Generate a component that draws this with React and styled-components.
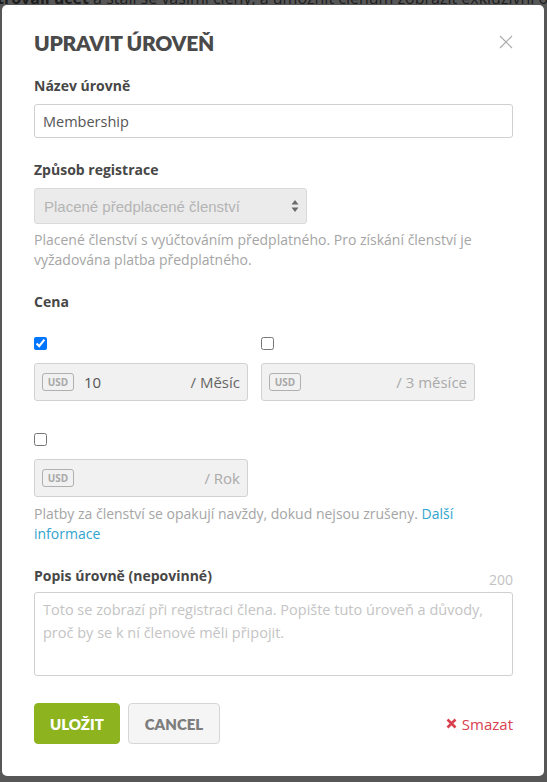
import React, { useState } from 'react'
import styled, { createGlobalStyle } from 'styled-components'

const GlobalStyle = createGlobalStyle`
    * { box-sizing: border-box; }
    body {
        margin: 0;
        background: #575757;
        font-family: "Open Sans", "Noto Sans", sans-serif;
        overflow: hidden;
    }
`

const Page = styled.div`
    width: 547px;
    height: 782px;
    background: #575757;
    overflow: hidden;
`

const BehindText = styled.div`
    height: 5px;
    overflow: hidden;
    white-space: nowrap;
    font-size: 16px;
    line-height: 16px;
    color: #1e1e1e;
    margin-left: -3px;
    div { margin-top: -10px; }
    b { font-weight: 700; }
`

const Modal = styled.div`
    width: 542px;
    margin-left: 2px;
    background: #fff;
    border-radius: 5px;
    padding: 24px 31px 32px 32px;
`

const Header = styled.div`
    display: flex;
    justify-content: space-between;
    align-items: flex-start;
    margin-bottom: 19px;
`

const Title = styled.h2`
    margin: 0;
    font-family: Lato, "Open Sans", sans-serif;
    font-weight: 800;
    font-size: 21px;
    line-height: 28px;
    letter-spacing: -0.3px;
    color: #4a4a4a;
`

const CloseButton = styled.button`
    border: none;
    background: none;
    padding: 0;
    margin: 6px 0 0 0;
    width: 14px;
    height: 14px;
    cursor: pointer;
    svg { display: block; }
`

const Field = styled.div`
    margin-bottom: ${p => p.$gap ?? 22}px;
`

const LabelRow = styled.div`
    display: flex;
    justify-content: space-between;
    align-items: flex-end;
    margin-bottom: ${p => p.$gap ?? 8}px;
`

const Label = styled.label`
    display: block;
    font-size: 14px;
    line-height: 20px;
    font-weight: 700;
    color: #474747;
`

const Counter = styled.span`
    font-size: 14px;
    line-height: 20px;
    color: #c2c2c2;
    margin-bottom: -4px;
`

const TextInput = styled.input`
    display: block;
    width: 100%;
    height: 34px;
    border: 1px solid #d0d0d0;
    border-radius: 3px;
    padding: 0 8px;
    font-family: "Open Sans", sans-serif;
    font-size: 14.5px;
    color: #555;
    outline: none;
`

const Select = styled.div`
    width: 273px;
    height: 36px;
    border: 1px solid #dadada;
    border-radius: 3px;
    background: #ebebeb;
    display: flex;
    align-items: center;
    justify-content: space-between;
    padding: 0 7px 0 9px;
    font-family: "Liberation Sans", Arial, sans-serif;
    font-size: 15px;
    color: #b4b4b4;
`

const Help = styled.p`
    margin: ${p => p.$top ?? 6}px 0 0;
    font-size: 14px;
    line-height: 20px;
    color: #a5a5a5;
    a {
        color: #2fa4cc;
        text-decoration: none;
    }
`

const PriceGrid = styled.div`
    display: grid;
    grid-template-columns: 214px 214px;
    column-gap: 13px;
    row-gap: 32px;
    margin-top: 25px;
`

const PriceCell = styled.div`
    display: flex;
    flex-direction: column;
    align-items: flex-start;
    gap: 13px;
`

const Check = styled.input`
    margin: 0;
    width: 13px;
    height: 13px;
`

const PriceBox = styled.div`
    width: 214px;
    height: 38px;
    border: 1px solid #d2d2d2;
    border-radius: 3px;
    background: #f1f1f1;
    display: flex;
    align-items: center;
    padding: 0 7px 0 7px;
    font-size: 15px;
`

const Currency = styled.span`
    flex: none;
    width: 32px;
    height: 18px;
    border: 1px solid #b0b0b0;
    border-radius: 3px;
    font-size: 10px;
    font-weight: 700;
    line-height: 16px;
    text-align: center;
    color: #a8a8a8;
    margin-right: 10px;
`

const Amount = styled.span`
    flex: 1;
    color: #555;
`

const Period = styled.span`
    color: ${p => (p.$active ? '#666' : '#aaa')};
`

const TextArea = styled.textarea`
    display: block;
    width: 100%;
    height: 84px;
    border: 1px solid #d0d0d0;
    border-radius: 3px;
    padding: 5px 8px;
    resize: none;
    font-family: "Open Sans", sans-serif;
    font-size: 14.5px;
    line-height: 23px;
    color: #555;
    outline: none;
    &::placeholder { color: #c4c4c4; }
`

const Footer = styled.div`
    display: flex;
    align-items: center;
    gap: 8px;
    margin-top: 27px;
`

const Button = styled.button`
    height: 41px;
    padding: 0 ${p => (p.$primary ? 15 : 16)}px;
    border-radius: 4px;
    border: 1px solid ${p => (p.$primary ? '#8db31f' : '#d6d6d6')};
    background: ${p => (p.$primary ? '#8db31f' : '#f5f5f5')};
    color: ${p => (p.$primary ? '#fff' : '#7d7d7d')};
    font-family: Lato, "Open Sans", sans-serif;
    font-weight: 800;
    font-size: 15px;
    cursor: pointer;
`

const DeleteLink = styled.a`
    margin-left: auto;
    display: flex;
    align-items: center;
    gap: 5px;
    font-size: 15px;
    color: #d8404e;
    text-decoration: none;
    cursor: pointer;
    svg { display: block; }
`

const prices = [
    { period: '/ Měsíc', value: '10', checked: true },
    { period: '/ 3 měsíce', value: '', checked: false },
    { period: '/ Rok', value: '', checked: false },
]

export default function App() {
    const [name, setName] = useState('Membership')
    const [checks, setChecks] = useState(prices.map(p => p.checked))

    return (
        <Page>
            <GlobalStyle />
            <BehindText>
                <div><b>trovali účet</b> a stali se vašimi členy, a umožnit členům zobrazit exkluzivní obsah</div>
            </BehindText>
            <Modal>
                <Header>
                    <Title>UPRAVIT ÚROVEŇ</Title>
                    <CloseButton aria-label="Zavřít">
                        <svg width="14" height="14" viewBox="0 0 14 14">
                            <path d="M1 1 L13 13 M13 1 L1 13" stroke="#ababab" strokeWidth="1.2" />
                        </svg>
                    </CloseButton>
                </Header>

                <Field>
                    <LabelRow><Label>Název úrovně</Label></LabelRow>
                    <TextInput value={name} onChange={e => setName(e.target.value)} />
                </Field>

                <Field>
                    <LabelRow><Label>Způsob registrace</Label></LabelRow>
                    <Select>
                        <span>Placené předplacené členství</span>
                        <svg width="8" height="14" viewBox="0 0 8 14">
                            <path d="M4 1 L7.5 5.5 H0.5 Z M4 13 L7.5 8.5 H0.5 Z" fill="#6a6a6a" />
                        </svg>
                    </Select>
                    <Help>
                        Placené členství s vyúčtováním předplatného. Pro získání členství je vyžadována platba předplatného.
                    </Help>
                </Field>

                <Field>
                    <Label>Cena</Label>
                    <PriceGrid>
                        {prices.map((p, i) => (
                            <PriceCell key={p.period}>
                                <Check
                                    type="checkbox"
                                    checked={checks[i]}
                                    onChange={() => setChecks(c => c.map((v, j) => (j === i ? !v : v)))}
                                />
                                <PriceBox>
                                    <Currency>USD</Currency>
                                    <Amount>{p.value}</Amount>
                                    <Period $active={p.checked}>{p.period}</Period>
                                </PriceBox>
                            </PriceCell>
                        ))}
                    </PriceGrid>
                    <Help $top={7}>
                        Platby za členství se opakují navždy, dokud nejsou zrušeny. <a href="#">Další informace</a>
                    </Help>
                </Field>

                <div>
                    <LabelRow $gap={6}>
                        <Label>Popis úrovně (nepovinné)</Label>
                        <Counter>200</Counter>
                    </LabelRow>
                    <TextArea placeholder="Toto se zobrazí při registraci člena. Popište tuto úroveň a důvody, proč by se k ní členové měli připojit." />
                </div>

                <Footer>
                    <Button $primary>ULOŽIT</Button>
                    <Button>CANCEL</Button>
                    <DeleteLink>
                        <svg width="11" height="11" viewBox="0 0 11 11">
                            <path d="M1.5 1.5 L9.5 9.5 M9.5 1.5 L1.5 9.5" stroke="#d8404e" strokeWidth="2.6" />
                        </svg>
                        Smazat
                    </DeleteLink>
                </Footer>
            </Modal>
        </Page>
    )
}
